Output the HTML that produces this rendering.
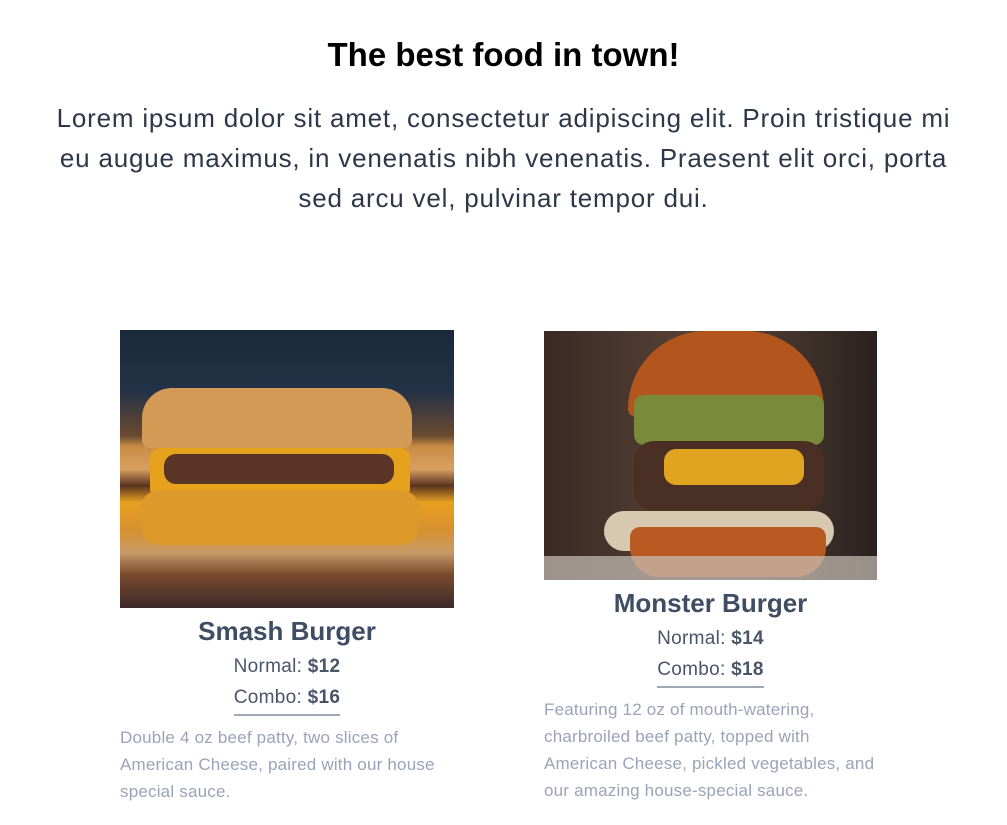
<!DOCTYPE html>
<html><head><meta charset="utf-8"><style>
body{margin:0;width:1007px;height:825px;background:#fff;font-family:"Liberation Sans",sans-serif;position:relative;overflow:hidden}
.a{position:absolute}
h1{position:absolute;left:0;width:1007px;top:34px;margin:0;text-align:center;font-size:33px;line-height:42px;color:#000}
.intro{left:0;width:1007px;top:98px;text-align:center;font-size:26px;letter-spacing:0.8px;line-height:40px;color:#2d3748;margin:0;white-space:nowrap}
.t{font-size:26px;font-weight:bold;color:#3f4d63;text-align:center;line-height:30px}
.p{font-size:19px;letter-spacing:0.3px;color:#4a5568;text-align:center;line-height:31px}
.p b{color:#4a5568}
.u{display:inline-block;border-bottom:2px solid #a0a7b4;line-height:28px;padding-bottom:2px}
.d{font-size:17px;letter-spacing:0.2px;line-height:27px;color:#9aa3b8;margin:0;white-space:nowrap}
</style></head><body>
<h1>The best food in town!</h1>
<p class="a intro">Lorem ipsum dolor sit amet, consectetur adipiscing elit. Proin tristique mi<br>eu augue maximus, in venenatis nibh venenatis. Praesent elit orci, porta<br>sed arcu vel, pulvinar tempor dui.</p>

<div class="a" style="left:120px;top:330px;width:334px;height:278px;background:linear-gradient(180deg,#1a2a3c 0%,#233246 22%,#6a4a30 38%,#c88c44 42%,#d8a060 50%,#5a3422 56%,#e8a020 62%,#d89030 72%,#c89a68 80%,#7a4a2c 88%,#3a2a2a 100%);overflow:hidden">
<div class="a" style="left:22px;top:58px;width:270px;height:60px;border-radius:30px 30px 8px 8px;background:#d39a56"></div>
<div class="a" style="left:30px;top:118px;width:260px;height:50px;background:#e6a21c;border-radius:10px"></div>
<div class="a" style="left:44px;top:124px;width:230px;height:30px;background:#5a3424;border-radius:12px"></div>
<div class="a" style="left:20px;top:160px;width:280px;height:55px;background:#dd9a2a;border-radius:20px"></div>
</div>
<div class="a t" style="left:120px;width:334px;top:616px">Smash Burger</div>
<div class="a p" style="left:120px;width:334px;top:651px">Normal: <b>$12</b></div>
<div class="a p" style="left:120px;width:334px;top:682px"><span class="u">Combo: <b>$16</b></span></div>
<p class="a d" style="left:120px;top:724px">Double 4 oz beef patty, two slices of<br>American Cheese, paired with our house<br>special sauce.</p>

<div class="a" style="left:544px;top:331px;width:333px;height:249px;background:linear-gradient(90deg,#3a2a24,#5a4438 50%,#2a2220);overflow:hidden">
<div class="a" style="left:84px;top:0;width:196px;height:86px;border-radius:98px 98px 10px 10px;background:#b2561e"></div>
<div class="a" style="left:90px;top:64px;width:190px;height:50px;background:#7a8a3a;border-radius:10px"></div>
<div class="a" style="left:90px;top:110px;width:190px;height:70px;background:#4a3024;border-radius:20px"></div>
<div class="a" style="left:120px;top:118px;width:140px;height:36px;background:#e0a420;border-radius:12px"></div>
<div class="a" style="left:60px;top:180px;width:230px;height:40px;background:#d8c8b0;border-radius:20px"></div>
<div class="a" style="left:86px;top:196px;width:196px;height:50px;background:#b85a22;border-radius:10px 10px 30px 30px"></div>
<div class="a" style="left:0;top:225px;width:333px;height:24px;background:#c8c0b8;opacity:.7"></div>
</div>
<div class="a t" style="left:544px;width:333px;top:588px">Monster Burger</div>
<div class="a p" style="left:544px;width:333px;top:623px">Normal: <b>$14</b></div>
<div class="a p" style="left:544px;width:333px;top:654px"><span class="u">Combo: <b>$18</b></span></div>
<p class="a d" style="left:544px;top:696px">Featuring 12 oz of mouth-watering,<br>charbroiled beef patty, topped with<br>American Cheese, pickled vegetables, and<br>our amazing house-special sauce.</p>
</body></html>
